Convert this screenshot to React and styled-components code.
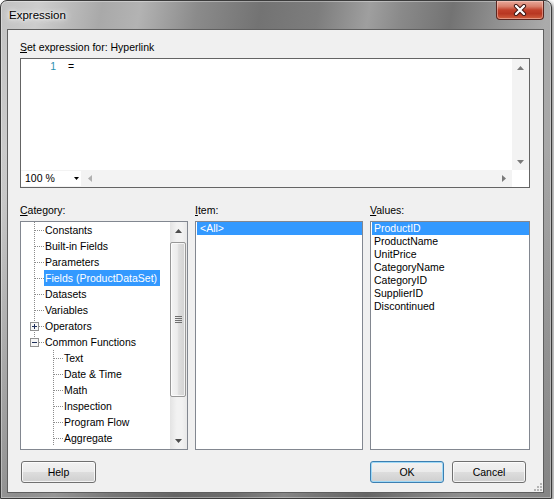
import React from 'react';
import styled, { createGlobalStyle } from 'styled-components';

const GlobalStyle = createGlobalStyle`
  html, body {
    margin: 0;
    padding: 0;
    background: #ffffff;
  }
  body {
    font-family: "Liberation Sans", Arial, sans-serif;
    font-size: 10.5px;
    color: #000;
  }
`;

const Window = styled.div`
  width: 552px;
  height: 499px;
  box-sizing: border-box;
  display: flex;
  flex-direction: column;
  border: 1px solid #3b3b3b;
  border-radius: 7px 7px 0 0;
  background:
    linear-gradient(to bottom, rgba(255,255,255,0) 30%, rgba(60,60,60,0.25) 100%),
    linear-gradient(100deg, #c2c2c2 0%, #cdcdcd 6%, #a9a9a9 16%, #b3b3b3 22%, #8b8b8b 31%, #737373 41%, #7d7d7d 50%, #9f9f9f 58%, #8a8a8a 63%, #737373 71%, #8f8f8f 78%, #ababab 86%, #9c9c9c 100%);
  box-shadow: inset 0 0 0 1px rgba(255,255,255,0.35), 2px 2px 4px rgba(0,0,0,0.45);
  overflow: hidden;
`;

const TitleBar = styled.div`
  height: 28px;
  flex: 0 0 28px;
  display: flex;
  justify-content: space-between;
  align-items: flex-start;
  padding: 0 7px 0 8px;
`;

const TitleText = styled.div`
  margin-top: 7px;
  font-size: 11.5px;
  line-height: 14px;
  color: #000;
  text-shadow: 0 0 6px #fff, 0 0 3px rgba(255,255,255,0.9), 0 0 10px rgba(255,255,255,0.7);
`;

const CloseButton = styled.div`
  width: 48px;
  height: 19px;
  box-sizing: border-box;
  border: 1px solid #5a2620;
  border-top: none;
  border-radius: 0 0 4px 4px;
  background: linear-gradient(to bottom, #e9a99a 0%, #d9806c 30%, #c2412b 50%, #b83722 70%, #d0603f 100%);
  box-shadow: inset 0 0 0 1px rgba(255,220,210,0.45);
  display: flex;
  align-items: center;
  justify-content: center;
`;

const Frame = styled.div`
  flex: 1;
  display: flex;
  padding: 0 7px 5px 6px;
`;

const Client = styled.div`
  position: relative;
  flex: 1;
  display: flex;
  flex-direction: column;
  border: 1px solid #5f5f5f;
  background: #f0f0f0;
  padding: 10px 13px 9px 12px;
`;

const Label = styled.div`
  line-height: 15px;
  height: 15px;
  margin-bottom: 3px;
  white-space: nowrap;
`;

const Key = styled.span`
  text-decoration: underline;
`;

const Editor = styled.div`
  height: 130px;
  box-sizing: border-box;
  border: 1px solid #646464;
  display: grid;
  grid-template-columns: 1fr 17px;
  grid-template-rows: 1fr 17px;
  background: #fff;
`;

const CodeLine = styled.div`
  display: flex;
  line-height: 15px;
  height: 15px;
`;

const Gutter = styled.span`
  width: 35px;
  text-align: right;
  color: #2b91af;
`;

const Code = styled.span`
  padding-left: 12px;
`;

const ScrollColumn = styled.div`
  display: flex;
  flex-direction: column;
  justify-content: space-between;
  background: #f3f3f3;
`;

const ArrowCell = styled.div`
  width: 17px;
  height: 17px;
  flex: 0 0 17px;
  display: flex;
  align-items: center;
  justify-content: center;
`;

const BottomBar = styled.div`
  display: flex;
  background: #f3f3f3;
`;

const ZoomBox = styled.div`
  width: 60px;
  height: 15px;
  margin-top: 1px;
  background: #fff;
  display: flex;
  align-items: center;
  justify-content: space-between;
  padding: 0 2px 0 4px;
  box-sizing: border-box;
  line-height: 15px;
`;

const HScroll = styled.div`
  flex: 1;
  display: flex;
  justify-content: space-between;
`;

const Corner = styled.div`
  background: #fff;
`;

const Columns = styled.div`
  margin-top: 15px;
  display: grid;
  grid-template-columns: 168px 168px 160px;
  column-gap: 7px;
`;

const ListBox = styled.div`
  height: 229px;
  box-sizing: border-box;
  border: 1px solid #828790;
  background: #fff;
  display: flex;
  overflow: hidden;
`;

const TreeBody = styled.div`
  flex: 1;
  display: flex;
  flex-direction: column;
`;

const TreeRow = styled.div`
  display: flex;
  height: 16px;
  line-height: 16px;
  padding-left: ${p => p.$depth * 19}px;
  white-space: nowrap;
`;

const RowText = styled.span`
  padding: 0 3px 0 1px;
  background: ${p => (p.$selected ? '#3399ff' : 'transparent')};
  color: ${p => (p.$selected ? '#fff' : '#000')};
`;

const VScroll = styled.div`
  width: 17px;
  display: flex;
  flex-direction: column;
  background: linear-gradient(to right, #e3e3e3, #f2f2f2 40%, #f2f2f2 70%, #e8e8e8);
`;

const Track = styled.div`
  flex: 1;
  padding: 3px 1px 35px 0;
  display: flex;
`;

const Thumb = styled.div`
  flex: 1;
  border: 1px solid #979797;
  border-radius: 2px;
  background: linear-gradient(to right, #f4f4f4 0%, #ececec 45%, #dedede 55%, #d2d2d2 100%);
  box-shadow: inset 0 0 0 1px rgba(255,255,255,0.7);
  display: flex;
  align-items: center;
  justify-content: center;
`;

const List = styled.div`
  flex: 1;
  padding-left: 1px;
  display: flex;
  flex-direction: column;
`;

const ListRow = styled.div`
  height: 13px;
  line-height: 13px;
  padding-left: ${p => p.$indent}px;
  white-space: nowrap;
  background: ${p => (p.$selected ? '#3399ff' : 'transparent')};
  color: ${p => (p.$selected ? '#fff' : '#000')};
`;

const ButtonRow = styled.div`
  margin-top: 11px;
  display: flex;
  justify-content: space-between;
  padding: 0 4px 0 1px;
`;

const ButtonGroup = styled.div`
  display: flex;
  gap: 8px;
`;

const Button = styled.div`
  width: ${p => p.$width}px;
  height: 22px;
  box-sizing: border-box;
  border: 1px solid ${p => (p.$default ? '#3c7fb1' : '#707070')};
  border-radius: 3px;
  background: linear-gradient(to bottom, #f2f2f2 0%, #ebebeb 48%, #dddddd 52%, #cfcfcf 100%);
  box-shadow: inset 0 0 0 1px ${p => (p.$default ? '#9fd9f7' : 'rgba(255,255,255,0.75)')};
  display: flex;
  align-items: center;
  justify-content: center;
  line-height: 20px;
`;

const Grip = styled.svg`
  position: absolute;
  right: 1px;
  bottom: 1px;
`;

const Arrow = ({ dir, color = '#606060' }) => {
  const shapes = {
    up: '0,4 3.5,0 7,4',
    down: '0,0 7,0 3.5,4',
    left: '4,0 4,7 0,3.5',
    right: '0,0 4,3.5 0,7',
  };
  const vertical = dir === 'up' || dir === 'down';
  return (
    <svg width={vertical ? 7 : 4} height={vertical ? 4 : 7} viewBox={vertical ? '0 0 7 4' : '0 0 4 7'}>
      <polygon points={shapes[dir]} fill={color} />
    </svg>
  );
};

const Connector = ({ last, expander }) => (
  <svg width="23" height="16" viewBox="0 0 23 16" shapeRendering="crispEdges">
    <line x1="13.5" y1="0" x2="13.5" y2={last ? 8 : 16} stroke="#8c8c8c" strokeDasharray="1 1" />
    <line x1="14" y1="8.5" x2="23" y2="8.5" stroke="#8c8c8c" strokeDasharray="1 1" />
    {expander && (
      <g>
        <rect x="9.5" y="4.5" width="8" height="8" fill="#f6f6f6" stroke="#919191" />
        <line x1="11" y1="8.5" x2="16" y2="8.5" stroke="#1f2f5a" />
        {expander === 'plus' && <line x1="13.5" y1="6" x2="13.5" y2="11" stroke="#1f2f5a" />}
      </g>
    )}
  </svg>
);

const categories = [
  { label: 'Constants', depth: 0 },
  { label: 'Built-in Fields', depth: 0 },
  { label: 'Parameters', depth: 0 },
  { label: 'Fields (ProductDataSet)', depth: 0, selected: true },
  { label: 'Datasets', depth: 0 },
  { label: 'Variables', depth: 0 },
  { label: 'Operators', depth: 0, expander: 'plus' },
  { label: 'Common Functions', depth: 0, expander: 'minus', last: true },
  { label: 'Text', depth: 1 },
  { label: 'Date & Time', depth: 1 },
  { label: 'Math', depth: 1 },
  { label: 'Inspection', depth: 1 },
  { label: 'Program Flow', depth: 1 },
  { label: 'Aggregate', depth: 1 },
];

const values = ['ProductID', 'ProductName', 'UnitPrice', 'CategoryName', 'CategoryID', 'SupplierID', 'Discontinued'];

export default function App() {
  return (
    <>
      <GlobalStyle />
      <Window>
        <TitleBar>
          <TitleText>Expression</TitleText>
          <CloseButton>
            <svg width="14" height="12" viewBox="0 0 14 12">
              <path d="M3 2 L11 10 M11 2 L3 10" stroke="#3a1410" strokeWidth="4.2" strokeLinecap="round" />
              <path d="M3 2 L11 10 M11 2 L3 10" stroke="#ffffff" strokeWidth="2.4" strokeLinecap="round" />
            </svg>
          </CloseButton>
        </TitleBar>
        <Frame>
          <Client>
            <Label>
              <Key>S</Key>et expression for: Hyperlink
            </Label>
            <Editor>
              <div>
                <CodeLine>
                  <Gutter>1</Gutter>
                  <Code>=</Code>
                </CodeLine>
              </div>
              <ScrollColumn>
                <ArrowCell><Arrow dir="up" color="#7a7a7a" /></ArrowCell>
                <ArrowCell><Arrow dir="down" color="#7a7a7a" /></ArrowCell>
              </ScrollColumn>
              <BottomBar>
                <ZoomBox>
                  <span>100 %</span>
                  <svg width="5" height="3" viewBox="0 0 5 3"><polygon points="0,0 5,0 2.5,3" fill="#000" /></svg>
                </ZoomBox>
                <HScroll>
                  <ArrowCell><Arrow dir="left" color="#b0b0b0" /></ArrowCell>
                  <ArrowCell><Arrow dir="right" color="#7a7a7a" /></ArrowCell>
                </HScroll>
              </BottomBar>
              <Corner />
            </Editor>
            <Columns>
              <div>
                <Label><Key>C</Key>ategory:</Label>
                <ListBox>
                  <TreeBody>
                    {categories.map(c => (
                      <TreeRow key={c.label} $depth={c.depth}>
                        <Connector last={c.last} expander={c.expander} />
                        <RowText $selected={c.selected}>{c.label}</RowText>
                      </TreeRow>
                    ))}
                  </TreeBody>
                  <VScroll>
                    <ArrowCell><Arrow dir="up" color="#4d4d4d" /></ArrowCell>
                    <Track>
                      <Thumb>
                        <svg width="7" height="7" viewBox="0 0 7 7" shapeRendering="crispEdges">
                          <line x1="0" y1="0.5" x2="7" y2="0.5" stroke="#6f6f6f" />
                          <line x1="0" y1="2.5" x2="7" y2="2.5" stroke="#6f6f6f" />
                          <line x1="0" y1="4.5" x2="7" y2="4.5" stroke="#6f6f6f" />
                          <line x1="0" y1="6.5" x2="7" y2="6.5" stroke="#6f6f6f" />
                        </svg>
                      </Thumb>
                    </Track>
                    <ArrowCell><Arrow dir="down" color="#4d4d4d" /></ArrowCell>
                  </VScroll>
                </ListBox>
              </div>
              <div>
                <Label><Key>I</Key>tem:</Label>
                <ListBox>
                  <List>
                    <ListRow $selected $indent={3}>&lt;All&gt;</ListRow>
                  </List>
                </ListBox>
              </div>
              <div>
                <Label><Key>V</Key>alues:</Label>
                <ListBox>
                  <List>
                    {values.map((v, i) => (
                      <ListRow key={v} $selected={i === 0} $indent={2}>{v}</ListRow>
                    ))}
                  </List>
                </ListBox>
              </div>
            </Columns>
            <ButtonRow>
              <Button $width={75}>Help</Button>
              <ButtonGroup>
                <Button $width={74} $default>OK</Button>
                <Button $width={74}>Cancel</Button>
              </ButtonGroup>
            </ButtonRow>
            <Grip width="8" height="8" viewBox="0 0 8 8" shapeRendering="crispEdges">
              {[[6, 0], [3, 3], [6, 3], [0, 6], [3, 6], [6, 6]].map(([x, y]) => (
                <rect key={`${x}-${y}`} x={x} y={y} width="2" height="2" fill="#b4b4b4" />
              ))}
            </Grip>
          </Client>
        </Frame>
      </Window>
    </>
  );
}
